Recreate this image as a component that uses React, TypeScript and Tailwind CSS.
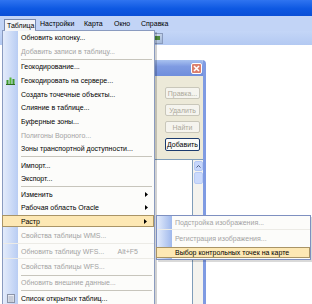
import { ReactNode } from 'react';

type Row =
  | { sep: true; h: string }
  | {
      sep?: false;
      label: string;
      h: string;
      disabled?: boolean;
      sub?: boolean;
      active?: boolean;
      shortcut?: string;
      icon?: ReactNode;
      faint?: boolean;
    };

const GeoIcon = () => (
  <svg width="9" height="9" viewBox="0 0 9 9">
    <rect x="0.5" y="4" width="2" height="4.5" fill="#3f9a2c" />
    <rect x="3.5" y="1.5" width="2" height="7" fill="#58b83a" />
    <rect x="6.5" y="3" width="2" height="5.5" fill="#3f9a2c" />
    <rect x="0" y="8" width="9" height="1" fill="#2d6e1f" />
  </svg>
);

const ListIcon = () => (
  <svg width="8" height="9" viewBox="0 0 8 9">
    <rect x="0.5" y="0.5" width="7" height="8" fill="#e9ecf3" stroke="#8c94a8" />
    <line x1="1.5" y1="3" x2="6.5" y2="3" stroke="#a5acbd" />
    <line x1="1.5" y1="5" x2="6.5" y2="5" stroke="#a5acbd" />
    <line x1="1.5" y1="7" x2="6.5" y2="7" stroke="#a5acbd" />
  </svg>
);

const mainItems: Row[] = [
  { label: 'Обновить колонку...', h: 'h-[13px]' },
  { label: 'Добавить записи в таблицу...', h: 'h-[14px]', disabled: true },
  { sep: true, h: 'h-[2px]' },
  { label: 'Геокодирование...', h: 'h-[13px]' },
  { label: 'Геокодировать на сервере...', h: 'h-[14px]', icon: <GeoIcon /> },
  { label: 'Создать точечные объекты...', h: 'h-[14px]' },
  { label: 'Слияние в таблице...', h: 'h-[13px]' },
  { label: 'Буферные зоны...', h: 'h-[14px]' },
  { label: 'Полигоны Вороного...', h: 'h-[14px]', disabled: true },
  { label: 'Зоны транспортной доступности...', h: 'h-[13px]' },
  { sep: true, h: 'h-[3px]' },
  { label: 'Импорт...', h: 'h-[14px]' },
  { label: 'Экспорт...', h: 'h-[13px]' },
  { sep: true, h: 'h-[3px]' },
  { label: 'Изменить', h: 'h-[13px]', sub: true },
  { label: 'Рабочая область Oracle', h: 'h-[13px]', sub: true },
  { label: 'Растр', h: 'h-[14px]', sub: true, active: true },
  { label: 'Свойства таблицы WMS...', h: 'h-[16px]', disabled: true, faint: true },
  { label: 'Обновить таблицу WFS...', h: 'h-[15px]', disabled: true, shortcut: 'Alt+F5', faint: true },
  { label: 'Свойства таблицы WFS...', h: 'h-[15px]', disabled: true },
  { sep: true, h: 'h-[2px]' },
  { label: 'Обновить внешние данные...', h: 'h-[13px]', disabled: true },
  { sep: true, h: 'h-[3px]' },
  { label: 'Список открытых таблиц...', h: 'h-[13px]', icon: <ListIcon /> },
];

const rasterItems: Row[] = [
  { label: 'Подстройка изображения...', h: 'h-[14px]', disabled: true, faint: true },
  { label: 'Регистрация изображения...', h: 'h-[16px]', disabled: true },
  { label: 'Выбор контрольных точек на карте', h: 'h-[13px]', active: true },
];

const Arrow = () => (
  <svg width="3" height="5" viewBox="0 0 3 5" className="ml-auto mr-[6px]">
    <path d="M0 0 L3 2.5 L0 5 Z" fill="#000" />
  </svg>
);

function MenuRows({ rows, textPad }: { rows: Row[]; textPad: string }) {
  return (
    <>
      {rows.map((row, i) =>
        row.sep ? (
          <div key={i} className={`${row.h} flex items-center`}>
            <div className="h-px w-full ml-[18px] mr-[2px] bg-[#c7c5bc]" />
          </div>
        ) : (
          <div key={i} className={`${row.h} relative flex`}>
            <div
              className={`flex-1 flex items-center ${
                row.active ? 'my-px -ml-px bg-[#fde8b4] border border-[#a99466]' : ''
              } ${row.faint ? 'border-b border-[#ecebe6]' : ''}`}
            >
              <span className="w-[15px] flex justify-center shrink-0">{row.icon}</span>
              <span className={`${textPad} whitespace-nowrap ${row.disabled ? 'text-[#a3a3a3]' : 'text-black'}`}>
                {row.label}
              </span>
              {row.shortcut && <span className="ml-auto mr-[16px] text-[#a3a3a3]">{row.shortcut}</span>}
              {row.sub && <Arrow />}
            </div>
          </div>
        ),
      )}
    </>
  );
}

export default function App() {
  return (
    <div className="relative w-[312px] h-[304px] overflow-hidden bg-white font-['Liberation_Sans',Arial,sans-serif] text-[7px] leading-none">
      {/* window chrome */}
      <div className="h-[16px] bg-[linear-gradient(to_bottom,#2f74f0,#0d58e2_55%,#0a4fd6)]" />
      <div className="h-[15px] bg-[#c2d4f6] flex items-center text-black">
        <span className="ml-[4px] w-[32px] h-[12px] mt-[3px] pl-[2px] flex items-center bg-[#f3f4f7] border border-b-0 border-[#7788ad]">
          Таблица
        </span>
        <span className="w-[48px] pl-[4px]">Настройки</span>
        <span className="w-[30px]">Карта</span>
        <span className="w-[27px]">Окно</span>
        <span>Справка</span>
      </div>
      <div className="h-[14px] bg-[linear-gradient(to_bottom,#c4d6f7,#b3c9f2)] flex items-center">
        <div className="ml-[152px] w-[11px] h-[11px] border border-[#8a9bbd] bg-[linear-gradient(135deg,#dfe7f5,#9fb6d8)] flex items-center justify-center">
          <div className="w-[5px] h-[4px] bg-[#4e8a3c]" />
        </div>
      </div>

      {/* dialog window behind the menu */}
      <div className="absolute left-[140px] top-[60px] w-[66px] h-[260px] flex flex-col rounded-tr-[4px] overflow-hidden border-r-[3px] border-[#7f9be2]">
        <div className="h-[16px] bg-[linear-gradient(to_bottom,#a9c2f0,#7f9be2_40%,#6f8edc)] flex items-center justify-end pr-[1px]">
          <div className="w-[11px] h-[11px] rounded-[2px] border border-white bg-[#dc7f6c] flex items-center justify-center">
            <svg width="7" height="7" viewBox="0 0 7 7">
              <path d="M1 1 L6 6 M6 1 L1 6" stroke="#fff" strokeWidth="1.6" />
            </svg>
          </div>
        </div>
        <div className="flex-1 bg-[#ece9d8] flex flex-col">
          <div className="flex flex-col items-end gap-[5px] pt-[11px] pr-[3px]">
            {['Правка...', 'Удалить', 'Найти'].map((t) => (
              <div
                key={t}
                className="w-[35px] h-[12px] rounded-[2px] border border-[#c9c7ba] bg-[#f5f4ee] flex items-center justify-center text-[#aca899]"
              >
                {t}
              </div>
            ))}
            <div className="w-[35px] h-[13px] rounded-[2px] border border-[#1c3b6e] bg-[#fbfbf9] flex items-center justify-center text-black">
              Добавить
            </div>
          </div>
          <div className="mt-[8px] flex-1 flex">
            <div className="flex-1 bg-white border-t border-r border-[#7f9db9]" />
            <div className="w-[10px] bg-[#f4f3ee] border-t border-[#7f9db9] flex flex-col items-center">
              <div className="mt-px w-[9px] h-[10px] rounded-[2px] bg-[#c6d6fb] border border-[#b4c8f4] flex items-center justify-center">
                <svg width="5" height="3" viewBox="0 0 5 3">
                  <path d="M0.5 2.5 L2.5 0.5 L4.5 2.5" stroke="#4d6185" strokeWidth="1" fill="none" />
                </svg>
              </div>
              <div className="mt-px w-[9px] h-[12px] rounded-[2px] bg-[#cbdafc] border border-[#b8cbf5]" />
            </div>
          </div>
        </div>
      </div>

      {/* Таблица dropdown */}
      <div className="absolute left-[2px] top-[30px] w-[153px] h-[290px] border border-[#8a9bbf] bg-[#fcfcfa] shadow-[2px_2px_0_rgba(0,0,0,0.18)]">
        <div className="absolute left-0 top-0 bottom-0 w-[15px] bg-[linear-gradient(to_right,#e4ecfb,#b9cdf3)]" />
        <div className="relative">
          <MenuRows rows={mainItems} textPad="pl-[3px]" />
        </div>
      </div>
      <div className="absolute left-[5px] top-[30px] w-[30px] h-px bg-[#f3f4f7]" />

      {/* Растр submenu */}
      <div className="absolute left-[156px] top-[215px] w-[155px] h-[45px] border border-[#7e90c0] bg-[#fcfcfa] shadow-[2px_2px_0_rgba(0,0,0,0.15)]">
        <div className="absolute left-0 top-0 bottom-0 w-[15px] bg-[linear-gradient(to_right,#e4ecfb,#9fb8ec)]" />
        <div className="relative">
          <MenuRows rows={rasterItems} textPad="pl-[3px]" />
        </div>
      </div>
    </div>
  );
}
